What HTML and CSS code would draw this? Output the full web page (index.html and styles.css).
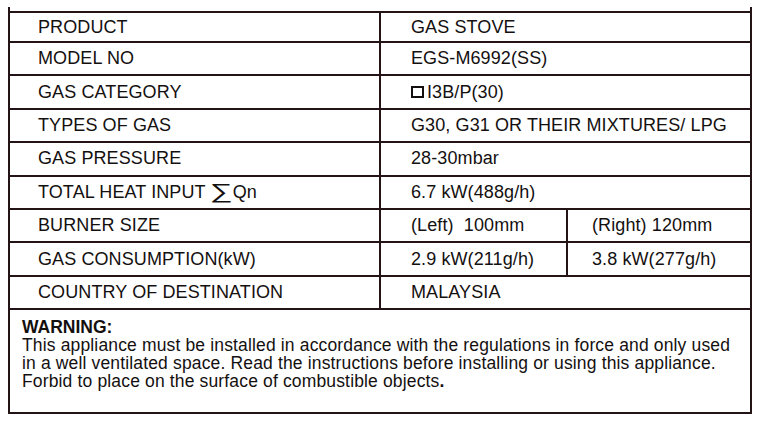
FILE: index.html
```html
<!DOCTYPE html>
<html>
<head>
<meta charset="utf-8">
<link rel="stylesheet" href="styles.css">
</head>
<body>
<div class="plate">
  <div class="spec">
    <div class="row first"><div class="label">PRODUCT</div><div class="value">GAS STOVE</div></div>
    <div class="row"><div class="label">MODEL NO</div><div class="value">EGS-M6992(SS)</div></div>
    <div class="row"><div class="label">GAS CATEGORY</div><div class="value"><span><span class="box"></span>I3B/P(30)</span></div></div>
    <div class="row"><div class="label">TYPES OF GAS</div><div class="value">G30, G31 OR THEIR MIXTURES/ LPG</div></div>
    <div class="row"><div class="label">GAS PRESSURE</div><div class="value">28-30mbar</div></div>
    <div class="row"><div class="label"><span>TOTAL HEAT INPUT&nbsp;<span class="sigma"><span class="sigma-glyph">∑</span></span>Qn</span></div><div class="value">6.7 kW(488g/h)</div></div>
    <div class="row"><div class="label">BURNER SIZE</div><div class="value split"><div class="part">(Left)&nbsp; 100mm</div><div class="part">(Right) 120mm</div></div></div>
    <div class="row"><div class="label">GAS CONSUMPTION(kW)</div><div class="value split"><div class="part">2.9 kW(211g/h)</div><div class="part">3.8 kW(277g/h)</div></div></div>
    <div class="row"><div class="label">COUNTRY OF DESTINATION</div><div class="value">MALAYSIA</div></div>
  </div>
  <div class="warning">
    <div class="warn-title">WARNING:</div>
    <p class="warn-text">This appliance must be installed in accordance with the regulations in force and only used<br>in a well ventilated space. Read the instructions before installing or using this appliance.<br>Forbid to place on the surface of combustible objects<b>.</b></p>
  </div>
</div>
</body>
</html>
```
FILE: styles.css
```css
html, body {
  margin: 0;
  padding: 0;
  background: #ffffff;
}
body {
  font-family: "Liberation Sans", Arial, sans-serif;
  color: #141010;
}
.plate {
  margin: 7px 0 0 8px;
  width: 744px;
  box-sizing: border-box;
  padding-top: 4px;
  border-left: 2px solid #241416;
  border-right: 2px solid #241416;
  border-bottom: 2px solid #241416;
}
.spec {
  border-top: 2px solid #241416;
}
.row {
  display: grid;
  grid-template-columns: 371px 1fr;
  height: 31.4px;
  border-bottom: 2px solid #241416;
  font-size: 18px;
  letter-spacing: 0.1px;
}
.row.first {
  height: 28px;
}
.label {
  border-right: 2px solid #241416;
  padding-left: 28px;
  display: flex;
  align-items: center;
  white-space: nowrap;
}
.value {
  padding-left: 30px;
  display: flex;
  align-items: center;
  white-space: nowrap;
}
.value.split {
  padding-left: 0;
  display: grid;
  grid-template-columns: 187px 1fr;
  align-items: stretch;
}
.part {
  display: flex;
  align-items: center;
  padding-left: 30px;
}
.part:first-child {
  border-right: 2px solid #241416;
}
.part + .part {
  padding-left: 24px;
}
.box {
  display: inline-block;
  width: 9px;
  height: 8px;
  border: 2px solid #141010;
  margin-right: 3px;
  vertical-align: baseline;
}
.sigma {
  display: inline-block;
  width: 20px;
  margin-right: 3px;
  margin-left: -1px;
  line-height: 0;
}
.sigma-glyph {
  display: inline-block;
  font-family: "DejaVu Sans", sans-serif;
  font-size: 20px;
  font-weight: 200;
  color: #141010;
  transform: scale(1.6, 1.02);
  transform-origin: left center;
}
.warning {
  height: 102px;
  box-sizing: border-box;
  padding: 8px 12px 0 12px;
  font-size: 17.5px;
  line-height: 18px;
}
.warn-title {
  font-weight: bold;
}
.warn-text {
  margin: 0;
  white-space: nowrap;
  letter-spacing: 0.15px;
}
```
